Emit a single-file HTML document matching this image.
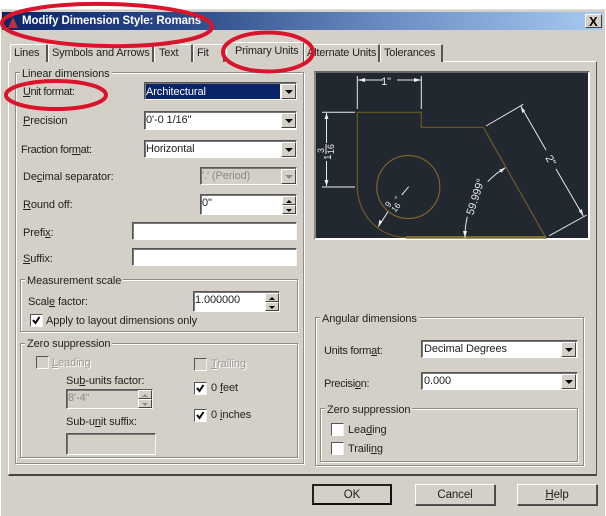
<!DOCTYPE html>
<html>
<head>
<meta charset="utf-8">
<style>
html,body{margin:0;padding:0;background:#fff}
#w{position:relative;width:606px;height:516px;overflow:hidden;background:#fff;font:11px/13px "Liberation Sans",Arial,sans-serif;letter-spacing:-.1px;color:#222;filter:blur(.3px)}
#w div,#w span.t{position:absolute}
.t{white-space:nowrap;position:absolute;margin-top:1px}
u{text-decoration:underline}
.win{left:1px;top:9px;width:604px;height:507px;background:#d4d0c8;border-top:1px solid #e4e2dc;box-sizing:border-box}
.title{left:2px;top:12px;width:601px;height:18px;background:linear-gradient(90deg,#0a246a 0%,#2c4a88 30%,#6b8fc4 65%,#a6caf0 100%)}
.close{left:585px;top:14px;width:17px;height:14px;background:#d4d0c8;border:1px solid;border-color:#fff #404040 #404040 #fff;box-sizing:border-box}
.tab{height:18px;top:44px;background:#d4d0c8;border-top:1px solid #fff;border-left:1px solid #fff;border-right:2px solid #555;box-sizing:border-box;text-align:left;line-height:17px;letter-spacing:-.2px;border-radius:2px 2px 0 0;white-space:nowrap}
.panel{left:8px;top:61px;width:589px;height:415px;box-sizing:border-box;border:1px solid;border-color:#fff #555 #444 #fff;border-bottom-width:2px;background:#d4d0c8}
.gb{box-sizing:border-box;border:1px solid #8f8c86;box-shadow:inset 1px 1px 0 #fff,1px 1px 0 #fff}
.lg{background:#d4d0c8;padding:0 2px;line-height:13px;white-space:nowrap}
.in{box-sizing:border-box;background:#fff;border:1px solid;border-color:#555 #f4f3f0 #fff #555;box-shadow:inset 1px 1px 0 #777;line-height:17px;padding-left:1px;white-space:nowrap;color:#222}
.dis{background:#d4d0c8;color:#8d8a84}
.btn{box-sizing:border-box;background:#d4d0c8;border:1px solid;border-color:#fff #444 #444 #fff}
.btn:after{content:"";position:absolute;left:50%;top:50%;margin:-2px 0 0 -4px;border:4px solid transparent;border-top:4px solid #000;border-bottom:0}
.btn.g:after{border-top-color:#8d8a84}
.up:after{border-top:0;border-bottom:3px solid #000;margin:-1px 0 0 -3px;border-left-width:3px;border-right-width:3px}
.dn:after{border-top:3px solid #000;border-bottom:0;margin:-1px 0 0 -3px;border-left-width:3px;border-right-width:3px}
.up.g:after{border-bottom-color:#8d8a84}
.dn.g:after{border-top-color:#8d8a84}
.cb{box-sizing:border-box;width:13px;height:13px;background:#fff;border:1px solid;border-color:#555 #eee #fff #555}
.cb.dis{background:#d4d0c8}
.dl{color:#9a9892;text-shadow:1px 1px 0 #fff}
.pb{box-sizing:border-box;background:#d4d0c8;border:1px solid;border-color:#fff #555 #555 #fff;box-shadow:1px 1px 0 #444;text-align:center;line-height:20px;font-size:11.5px}
svg{position:absolute;left:0;top:0}
</style>
</head>
<body>
<div id="w">
<div class="win"></div>
<div class="title"></div>
<div style="left:8px;top:17px;width:0;height:0;border-left:5px solid transparent;border-right:5px solid transparent;border-bottom:11px solid #c0303a"></div>
<span class="t" style="left:22px;top:14px;font-weight:bold;font-size:11.5px;letter-spacing:-.1px;color:#fff">Modify Dimension Style: Romans</span>
<div class="close"><span class="t" style="left:3px;top:-1px;font-weight:bold;font-size:13px;color:#000">X</span></div>

<div class="panel"></div>
<div class="tab" style="left:10px;width:38px;padding-left:3px">Lines</div>
<div class="tab" style="left:48px;width:106px;padding-left:3px;letter-spacing:-.15px">Symbols and Arrows</div>
<div class="tab" style="left:154px;width:39px;padding-left:4px">Text</div>
<div class="tab" style="left:193px;width:32px;padding-left:3px">Fit</div>
<div class="tab" style="left:226px;top:42px;width:78px;height:21px;border-bottom:0;line-height:16px;border-right-width:1px;padding-left:8px">Primary Units</div>
<div class="tab" style="left:304px;width:76px;padding-left:2px">Alternate Units</div>
<div class="tab" style="left:380px;width:63px;padding-left:3px">Tolerances</div>

<!-- left column -->
<div class="gb" style="left:15px;top:72px;width:289px;height:392px"></div>
<div class="lg" style="left:20px;top:68px">Linear dimensions</div>

<span class="t" style="left:23px;top:85px;letter-spacing:-.45px"><u>U</u>nit format:</span>
<div class="in" style="left:144px;top:82px;width:153px;height:18px"></div>
<div style="left:146px;top:84px;width:134px;height:15px;background:#0a246a;color:#fff;line-height:16px;white-space:nowrap">Architectural</div>
<div class="btn" style="left:281px;top:84px;width:15px;height:15px"></div>

<span class="t" style="left:23px;top:114px"><u>P</u>recision</span>
<div class="in" style="left:144px;top:111px;width:153px;height:19px">0'-0 1/16"</div>
<div class="btn" style="left:281px;top:113px;width:15px;height:15px"></div>

<span class="t" style="left:21px;top:143px;letter-spacing:-.4px">Fraction for<u>m</u>at:</span>
<div class="in" style="left:144px;top:140px;width:153px;height:18px">Horizontal</div>
<div class="btn" style="left:281px;top:142px;width:15px;height:15px"></div>

<span class="t" style="left:23px;top:170px">De<u>c</u>imal separator:</span>
<div class="in dis" style="left:200px;top:167px;width:97px;height:18px">'.' (Period)</div>
<div class="btn g" style="left:281px;top:169px;width:15px;height:15px"></div>

<span class="t" style="left:23px;top:198px"><u>R</u>ound off:</span>
<div class="in" style="left:200px;top:194px;width:97px;height:21px">0"</div>
<div class="btn up" style="left:282px;top:196px;width:14px;height:9px"></div>
<div class="btn dn" style="left:282px;top:205px;width:14px;height:9px"></div>

<span class="t" style="left:23px;top:226px">Prefi<u>x</u>:</span>
<div class="in" style="left:132px;top:222px;width:165px;height:18px"></div>
<span class="t" style="left:23px;top:252px"><u>S</u>uffix:</span>
<div class="in" style="left:132px;top:248px;width:165px;height:18px"></div>

<div class="gb" style="left:20px;top:279px;width:278px;height:53px"></div>
<div class="lg" style="left:25px;top:275px">Measurement scale</div>
<span class="t" style="left:28px;top:295px">Scal<u>e</u> factor:</span>
<div class="in" style="left:193px;top:291px;width:87px;height:21px">1.000000</div>
<div class="btn up" style="left:265px;top:293px;width:14px;height:9px"></div>
<div class="btn dn" style="left:265px;top:302px;width:14px;height:9px"></div>
<div class="cb" style="left:30px;top:314px"></div>
<span class="t" style="left:46px;top:314px">Apply to layout dimensions only</span>

<div class="gb" style="left:20px;top:343px;width:278px;height:115px"></div>
<div class="lg" style="left:25px;top:338px">Zero suppression</div>
<div class="cb dis" style="left:36px;top:356px"></div>
<span class="t dl" style="left:52px;top:356px"><u>L</u>eading</span>
<span class="t" style="left:66px;top:374px">Su<u>b</u>-units factor:</span>
<div class="in dis" style="left:66px;top:389px;width:87px;height:20px">8'-4"</div>
<div class="btn up g" style="left:138px;top:390px;width:14px;height:9px"></div>
<div class="btn dn g" style="left:138px;top:399px;width:14px;height:9px"></div>
<span class="t" style="left:66px;top:415px">Sub-u<u>n</u>it suffix:</span>
<div class="in dis" style="left:66px;top:433px;width:90px;height:22px"></div>
<div class="cb dis" style="left:194px;top:358px"></div>
<span class="t dl" style="left:211px;top:357px"><u>T</u>railing</span>
<div class="cb" style="left:194px;top:382px"></div>
<span class="t" style="left:211px;top:381px">0 <u>f</u>eet</span>
<div class="cb" style="left:194px;top:409px"></div>
<span class="t" style="left:211px;top:408px">0 <u>i</u>nches</span>

<!-- preview frame -->
<div style="left:314px;top:71px;width:276px;height:169px;box-sizing:border-box;border:2px solid;border-color:#666 #fff #fff #888;background:#212830"></div>

<!-- right column -->
<div class="gb" style="left:315px;top:317px;width:269px;height:149px"></div>
<div class="lg" style="left:320px;top:313px">Angular dimensions</div>
<span class="t" style="left:324px;top:344px;letter-spacing:-.3px">Units form<u>a</u>t:</span>
<div class="in" style="left:421px;top:340px;width:157px;height:18px;padding-left:2px">Decimal Degrees</div>
<div class="btn" style="left:561px;top:342px;width:15px;height:15px"></div>
<span class="t" style="left:324px;top:377px;letter-spacing:-.3px">Precisi<u>o</u>n:</span>
<div class="in" style="left:421px;top:372px;width:157px;height:18px;padding-left:2px">0.000</div>
<div class="btn" style="left:561px;top:374px;width:15px;height:15px"></div>
<div class="gb" style="left:320px;top:408px;width:258px;height:54px"></div>
<div class="lg" style="left:325px;top:404px">Zero suppression</div>
<div class="cb" style="left:331px;top:423px"></div>
<span class="t" style="left:348px;top:423px">Lea<u>d</u>ing</span>
<div class="cb" style="left:331px;top:442px"></div>
<span class="t" style="left:348px;top:442px">Traili<u>n</u>g</span>

<!-- bottom buttons -->
<div class="pb" style="left:312px;top:484px;width:80px;height:21px;border:2px solid #222;border-color:#222 #111 #111 #222;box-shadow:none;line-height:18px">OK</div>
<div class="pb" style="left:415px;top:484px;width:80px;height:21px">Cancel</div>
<div class="pb" style="left:517px;top:484px;width:80px;height:21px"><u>H</u>elp</div>

<svg width="606" height="516" viewBox="0 0 606 516" fill="none">
<!-- checks -->
<g stroke="#000" stroke-width="2">
<path d="M33 320l2.5 3 4-6"/>
<path d="M197 388l2.5 3 4-6"/>
<path d="M197 415l2.5 3 4-6"/>
</g>
<!-- part outline -->
<g stroke="#6e5a22" stroke-width="1.2">
<path d="M357.3 186.7V112.3H421.3V127.3H483.3L546 238H406"/>
<path d="M406 237.5A49 51 0 0 1 357.3 186.7"/>
<circle cx="408.3" cy="187" r="31.5" stroke="#7a6428"/>
</g>
<path d="M406 237H546" stroke="#7d6a30" stroke-width="2"/>
<!-- dimensions -->
<g stroke="#e8e8e8" stroke-width="1">
<path d="M357.3 76V109M421.3 76V109M358 80H383M397 80H421"/>
<path d="M322 112.3H355M326.5 113V143M326.5 161V186"/>
<path d="M486 126L523.3 104.3M549.3 235.7L586.7 215"/>
<path d="M520.7 106L546 150M556 169L583.3 216"/>
<path d="M408.7 186.7L401.7 195M388 211.7L378.3 226.7"/>
<path d="M505.3 167.7A81.5 81.5 0 0 0 487.7 181.7M467.3 216.7A81.5 81.5 0 0 0 465 238"/>
</g>
<path d="M322 187H355" stroke="#8a8d90" stroke-width="2"/>
<g fill="#eee">
<path d="M358 80l7-2v4zM421 80l-7-2v4z"/>
<path d="M326.5 113l-2 6h4zM326.5 186l-2-6h4z"/>
<path d="M520.7 106l1.5 7 3-2zM583.3 216l-1.5-7-3 2z"/>
<path d="M378.3 226.7l1-7 3 2z"/>
<path d="M505.3 167.7l-6 2 2 3zM465 238l-2-7h4z"/>
</g>
<g fill="#e8e8e8" font-family="Liberation Sans,Arial,sans-serif" font-size="11">
<text x="386" y="85" text-anchor="middle">1"</text>
<g transform="translate(331 160) rotate(-90)" font-size="9">
<text x="0" y="0" font-size="10">1</text>
<text x="7" y="-7">3</text>
<text x="6" y="3">16</text>
<path d="M6 -5H16" stroke="#e8e8e8"/>
</g>
<g transform="translate(389 208) rotate(-52)" font-size="8.5">
<text x="0" y="0">9</text>
<text x="0" y="8">16</text>
<text x="11" y="4">"</text>
</g>
<text x="476" y="200" text-anchor="middle" transform="rotate(-72 476 197)" font-size="11">59.999°</text>
<text x="551" y="164" text-anchor="middle" transform="rotate(60 551 160)">2"</text>
</g>
<!-- red ellipses -->
<g stroke="#d9142b" stroke-width="4">
<ellipse cx="107" cy="25" rx="105" ry="21" transform="rotate(1 107 25)"/>
<ellipse cx="268" cy="52" rx="45" ry="19.5"/>
<ellipse cx="56" cy="95" rx="50" ry="14"/>
</g>
</svg>
</div>
</body>
</html>
